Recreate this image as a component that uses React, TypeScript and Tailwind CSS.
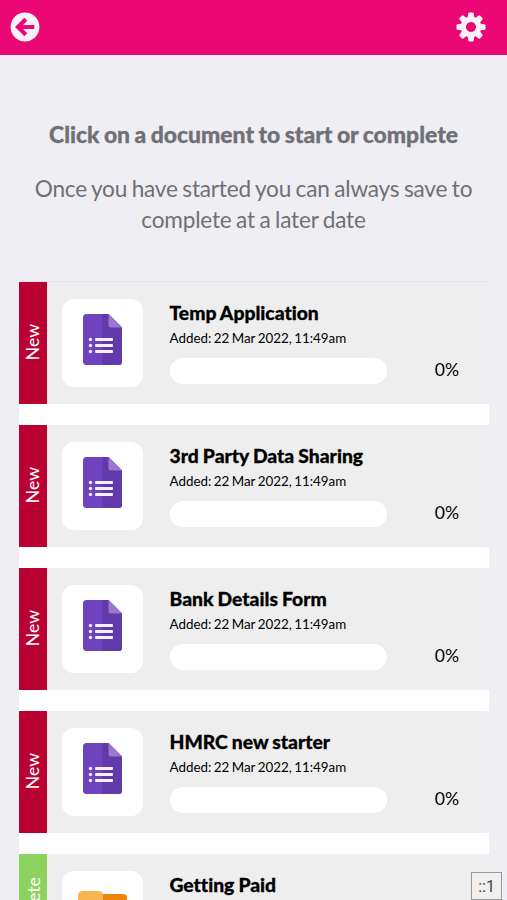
type Status = "New" | "Complete";

interface DocumentItem {
  title: string;
  status: Status;
  added: string;
  progress: number;
}

const ADDED = "Added: 22 Mar 2022, 11:49am";

const documents: DocumentItem[] = [
  { title: "Temp Application", status: "New", added: ADDED, progress: 0 },
  { title: "3rd Party Data Sharing", status: "New", added: ADDED, progress: 0 },
  { title: "Bank Details Form", status: "New", added: ADDED, progress: 0 },
  { title: "HMRC new starter", status: "New", added: ADDED, progress: 0 },
];

function BackIcon() {
  return (
    <svg viewBox="0 0 30 30" className="h-[30px] w-[30px]">
      <circle cx="15" cy="15" r="14.4" fill="#f8f3f8" />
      <path d="M15.8 7.2 8 15l7.8 7.8M8.5 15H24.3" fill="none" stroke="#eb0874" strokeWidth="4.2" />
    </svg>
  );
}

function GearIcon() {
  return (
    <svg viewBox="-15 -15 30 30" className="h-[30px] w-[30px]">
      <g fill="#f8f3f8">
        {[0, 45, 90, 135, 180, 225, 270, 315].map((angle) => (
          <path
            key={angle}
            d="M-3.3 -9 -2.7 -13.6Q-2.5 -14.5 -1.7 -14.5H1.7Q2.5 -14.5 2.7 -13.6L3.3 -9Z"
            transform={`rotate(${angle})`}
          />
        ))}
      </g>
      <circle r="7.6" fill="none" stroke="#f8f3f8" strokeWidth="5.6" />
      <circle r="4.8" fill="#eb0874" />
    </svg>
  );
}

function FormIcon() {
  return (
    <svg viewBox="0 0 39 51" className="h-[51px] w-[39px]">
      <path d="M3.5 0H25.5L39 13.5V47.5Q39 51 35.5 51H3.5Q0 51 0 47.5V3.5Q0 0 3.5 0Z" fill="#6f43bd" />
      <path d="M19.5 0H25.5L39 13.5V47.5Q39 51 35.5 51H19.5Z" fill="#6039aa" />
      <path d="M25.5 0 39 13.5H28Q25.5 13.5 25.5 11Z" fill="#9c77d0" />
      <g fill="#f5effc">
        <circle cx="7.5" cy="25.5" r="1.7" />
        <circle cx="7.5" cy="31.5" r="1.7" />
        <circle cx="7.5" cy="37.5" r="1.7" />
        <rect x="12" y="24" width="18" height="3" rx="1" />
        <rect x="12" y="30" width="18" height="3" rx="1" />
        <rect x="12" y="36" width="18" height="3" rx="1" />
      </g>
    </svg>
  );
}

function FolderIcon() {
  return (
    <svg viewBox="0 0 50 44" className="h-[44px] w-[50px]">
      <path d="M20 3H45Q49 3 49 7V20H20Z" fill="#ee8508" />
      <path d="M5 0H20Q25 0 25 5V10H50V40Q50 44 46 44H4Q0 44 0 40V5Q0 0 5 0Z" fill="#f8b450" />
    </svg>
  );
}

function DocumentRow({ item }: { item: DocumentItem }) {
  return (
    <li className="flex h-[122px] bg-[#eeeeee]">
      <div className="flex w-[28px] shrink-0 items-center justify-center bg-[#ba0232] pb-[2px] text-[17.6px] text-white">
        <span className="rotate-180 leading-[28px] [writing-mode:vertical-rl]">{item.status}</span>
      </div>
      <div className="mt-[17px] ml-[15px] flex h-[88px] w-[81px] shrink-0 justify-center rounded-[12px] bg-white pt-[15px]">
        <FormIcon />
      </div>
      <div className="ml-[26.5px] w-[217.5px] shrink-0 pt-[18px]">
        <h2 className="text-[19.3px] leading-[26px] font-black whitespace-nowrap [font-variant-ligatures:none] [word-spacing:-0.5px] [-webkit-text-stroke:0.3px_black]">
          {item.title}
        </h2>
        <p className="mt-[2px] text-[13.4px] leading-[20px] whitespace-nowrap [word-spacing:-1px]">{item.added}</p>
        <div className="mt-[10px] h-[26px] overflow-hidden rounded-full bg-white">
          <div className="h-full bg-[#8bd35c]" style={{ width: `${item.progress}%` }} />
        </div>
      </div>
      <div className="flex-1 pt-[75px] pr-[30px] text-right text-[17.6px] leading-[26px]">{item.progress}%</div>
    </li>
  );
}

/* Last row: only its top part fits above the bottom of the screen. */
function CompletedRow() {
  return (
    <li className="flex h-[46px] overflow-hidden bg-[#eeeeee]">
      <div className="flex h-[122px] w-[28px] shrink-0 items-center justify-center bg-[#8bd35c] text-[17.8px] text-white">
        <span className="rotate-180 leading-[28px] [writing-mode:vertical-rl]">Complete</span>
      </div>
      <div className="mt-[17px] ml-[15px] flex h-[88px] w-[81px] shrink-0 justify-center rounded-[12px] bg-white pt-[20px]">
        <FolderIcon />
      </div>
      <div className="ml-[26.5px] pt-[18px]">
        <h2 className="text-[19.3px] leading-[26px] font-black whitespace-nowrap [font-variant-ligatures:none] [word-spacing:-0.5px] [-webkit-text-stroke:0.3px_black]">
          Getting Paid
        </h2>
      </div>
    </li>
  );
}

export default function App() {
  return (
    <div className="relative h-[900px] w-full overflow-hidden bg-[#eeeef3] font-['Lato',sans-serif] text-black">
      <header className="flex h-[54.5px] items-center justify-between bg-[#eb0874] pr-[21px] pl-[10px]">
        <button aria-label="Back">
          <BackIcon />
        </button>
        <button aria-label="Settings">
          <GearIcon />
        </button>
      </header>
      <main className="px-[19px]">
        <section className="h-[227.5px] pt-[64px] text-center text-[#707075]">
          <h1 className="text-[22.9px] leading-[30px] font-black whitespace-nowrap [word-spacing:-1px] [-webkit-text-stroke:0.3px_#707075]">
            Click on a document to start or complete
          </h1>
          <p className="mt-[24px] text-[22.6px] leading-[31px] tracking-[-0.2px] [word-spacing:-1px]">
            Once you have started you can always save to complete at a later date
          </p>
        </section>
        <ul className="flex w-[470px] flex-col gap-[21px] bg-white shadow-[0_-1px_0_#e6e6e9]">
          {documents.map((item) => (
            <DocumentRow key={item.title} item={item} />
          ))}
          <CompletedRow />
        </ul>
      </main>
      <div className="absolute right-[5px] bottom-0 flex h-[28px] w-[31px] items-center justify-center border border-[#999] bg-[#f1efee] pt-[2px] font-['Roboto',sans-serif] text-[16px] text-[#444]">
        ::1
      </div>
    </div>
  );
}
